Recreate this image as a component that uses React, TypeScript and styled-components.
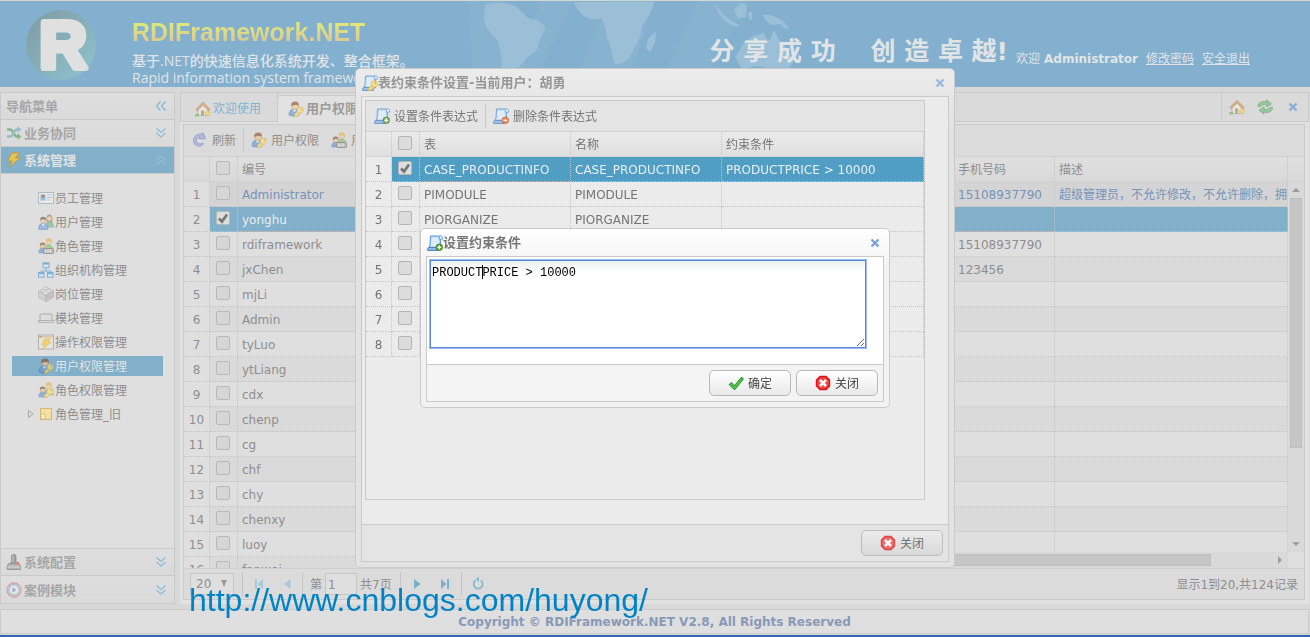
import React from "react";
import styled, { createGlobalStyle, css } from "styled-components";

const GlobalStyle = createGlobalStyle`
  *, *::before, *::after { box-sizing: border-box; }
  html, body { margin: 0; padding: 0; }
  body {
    background: #d8d8d8;
    font: 12px/16px "DejaVu Sans", "Noto Sans CJK SC", sans-serif;
    color: #8e8e8e;
    overflow: hidden;
  }
  button, input, select, textarea { font: inherit; color: inherit; margin: 0; }
  button { background: none; border: 0; padding: 0; cursor: pointer; text-align: left; }
`;

/* ---------- icons ---------- */

const IconBox = styled.svg<{ $fade?: number }>`
  width: 16px;
  height: 16px;
  flex: none;
  display: block;
  opacity: ${(p) => p.$fade ?? 1};
`;

type IconName =
  | "home" | "userKey" | "groupKey" | "users" | "group" | "reload" | "scrollAdd" | "scrollDel" | "scrollKey"
  | "card" | "org" | "brick" | "laptop" | "winBolt" | "note" | "shuffle" | "bolt" | "stamp" | "clock"
  | "ok" | "cancel" | "sync" | "cross" | "down2" | "up2" | "left2" | "first" | "prev" | "next" | "last" | "load";

const scroll = (
  <>
    <path d="M3.500 1h10v12H1.800L3 10z" fill="#b5d8f6" stroke="#5f95d2" />
    <path d="M4.700 2.500h7v9H3.800z" fill="#dceefc" />
    <path d="M12.300 2.500c0-2.200 3.200-2.200 3.200 0v1.700h-3.200z" fill="#e6f2fc" stroke="#5f95d2" strokeWidth=".9" />
    <path d="M.6 15.400c-.3-1.800.4-3 1.800-3h9.200c-1 1-1 2 0 3z" fill="#8fbcec" stroke="#4478b8" strokeWidth=".9" />
  </>
);
const person = (
  <>
    <path d="M1 14c0-4 2-6 5-6s5 2 5 6c-2 1.500-8 1.500-10 0z" fill="#5f93d6" stroke="#3b6cae" strokeWidth=".7" />
    <path d="M4.500 8.500L6.500 11l2-2.500z" fill="#fff" />
    <circle cx="7" cy="4.800" r="3.500" fill="#f6c695" stroke="#a9713f" strokeWidth=".6" />
    <path d="M3.300 5C2.800 1.500 5 .5 7.300.5c2.500 0 4 1.500 3.400 4.200C9.500 3.500 6 4 3.300 5z" fill="#8a4b22" />
  </>
);
const key = (
  <>
    <path d="M10.800 9l-4.300 4.300v2.200h3l.5-1.500 1.300-.2.300-1.400 1.700-.9z" fill="#f9d95c" stroke="#cf9c2c" strokeWidth=".6" />
    <circle cx="12.300" cy="9" r="3.200" fill="#fbdf6e" stroke="#cf9c2c" strokeWidth=".6" />
    <circle cx="13.400" cy="8" r=".8" fill="#b98514" />
  </>
);
const blonde = (
  <>
    <path d="M7 12c0-4 1.500-5 4-5s4 2 4 6z" fill="#7fc36a" stroke="#4e9440" strokeWidth=".6" />
    <circle cx="10.800" cy="4" r="2.700" fill="#f6cf9d" stroke="#b98a45" strokeWidth=".5" />
    <path d="M8 4c-.5-3 1-3.700 3-3.700s3.300 1.500 2.700 4C12.500 3 10 3 8 4z" fill="#e3b13c" />
    <path d="M.8 15c0-3.500 1.500-5 3.700-5s3.800 1.500 3.800 5z" fill="#5f93d6" stroke="#3b6cae" strokeWidth=".6" />
    <circle cx="4.600" cy="7.700" r="2.500" fill="#f6c695" stroke="#a9713f" strokeWidth=".5" />
    <path d="M2 7.700c-.4-2.500 1-3.200 2.700-3.200s3 1 2.500 3.200C6 6.500 4 6.700 2 7.700z" fill="#7a4a25" />
  </>
);
const bolt = <path d="M6 .8h7.500L9.500 5.500h5L3 15.500l3-6.500H1.500z" fill="#f9c83a" stroke="#d28a14" strokeWidth=".8" />;

const drawings: Record<IconName, React.ReactNode> = {
  home: (
    <>
      <path d="M3 8v6.500h10V8L8 3z" fill="#f7efe0" stroke="#9d9078" strokeWidth=".8" />
      <path d="M.8 8.500L8 1.200l7.200 7.300-1.400 1.300L8 4.200 2.200 9.800z" fill="#d99a5e" stroke="#a06a3c" strokeWidth=".7" />
      <path d="M6 14.500V9.500h3v5z" fill="#8f8f8f" />
      <path d="M0 15.500v-2.300l4-.7v3z" fill="#72b74c" />
      <path d="M12.500 8.700l1 2.200 2.400.3-1.700 1.700.4 2.400-2.100-1.200-2.200 1.200.4-2.400-1.700-1.700 2.400-.3z" fill="#fbd64a" stroke="#d8a31a" strokeWidth=".5" />
    </>
  ),
  userKey: <>{person}{key}</>,
  groupKey: <>{blonde}{key}</>,
  users: (
    <>
      <path d="M8.500 13V9c.5-2 5.500-2 6.500 1l.5 3z" fill="#6fb58c" stroke="#3f8860" strokeWidth=".6" />
      <path d="M8.500 7c0-3.500 0-6.500 2.700-6.500S14.500 3 14.300 8z" fill="#a86a3a" />
      <circle cx="11.300" cy="4.500" r="2.200" fill="#f6cf9d" />
      <path d="M.6 15.500C.6 11 2 9.500 5 9.500s5 1.500 5 6z" fill="#6ea3dc" stroke="#3b6cae" strokeWidth=".6" />
      <path d="M4 9.600l1.200 3 1.300-3z" fill="#fff" />
      <circle cx="5.200" cy="6.300" r="2.800" fill="#f6c695" stroke="#a9713f" strokeWidth=".5" />
      <path d="M2.300 6.300c-.4-2.500 1-3.600 3-3.600s3.200 1 2.700 3.600C6.500 5 4.500 5 2.300 6.300z" fill="#555" />
    </>
  ),
  group: (
    <>
      {blonde}
      <rect x="5.500" y="10.500" width="10" height="5" rx="1" fill="#aaa" stroke="#555" strokeWidth=".8" />
      <path d="M7 12.200h7M7 13.900h7" stroke="#fff" strokeWidth=".9" strokeDasharray="1.500 .8" />
    </>
  ),
  reload: (
    <path d="M11.500 1v2c1 0 1.500.5 1.500 1.500V7H7.500V5.500C5.500 6 4.500 7 4.500 8.500c0 3 3.500 4 6.500 2.500 1 0 .5 1.500-1 2.500-4 2-8.500-.5-8.500-5C1.500 4.500 4.500 2 8 2z" fill="#9eabd8" stroke="#6b7fba" strokeWidth=".7" />
  ),
  scrollAdd: (
    <>
      {scroll}
      <circle cx="12.300" cy="12.300" r="3.300" fill="#5fa83a" stroke="#2f6d1a" strokeWidth=".7" />
      <path d="M12.300 10.300v4M10.300 12.300h4" stroke="#fff" strokeWidth="1.300" />
    </>
  ),
  scrollDel: (
    <>
      {scroll}
      <circle cx="12.300" cy="12.300" r="3.300" fill="#ee7430" stroke="#b84512" strokeWidth=".7" />
      <path d="M10.300 12.300h4" stroke="#fff" strokeWidth="1.300" />
    </>
  ),
  scrollKey: <>{scroll}{key}</>,
  card: (
    <>
      <rect x=".5" y="2.500" width="15" height="11" fill="#eef2f6" stroke="#9aa3ad" />
      <rect x="2.500" y="4.500" width="5" height="6" fill="#6da5dd" />
      <circle cx="5" cy="6.300" r="1.500" fill="#84501f" />
      <path d="M9 5h5M9 7.500h5M9 10h3" stroke="#8db4da" strokeWidth="1.200" />
    </>
  ),
  org: (
    <g fill="#d5eafc" stroke="#3f90d0">
      <path d="M8 6v3M3 11.500V9h10v2.500" fill="none" />
      <rect x="5" y=".8" width="6" height="5" /><rect x=".5" y="10.500" width="5.500" height="4.700" /><rect x="9.500" y="10.500" width="5.500" height="4.700" />
      <path d="M5 1.800h6M.5 11.500H6M9.500 11.500H15" strokeWidth="1.600" />
    </g>
  ),
  brick: (
    <g stroke="#9a9a9a" strokeWidth=".7">
      <path d="M.5 5.500L8 9v6.500L.5 11.500z" fill="#c9c9c9" /><path d="M15.500 4.500L8 9v6.500l7.500-4.500z" fill="#b0b0b0" />
      <path d="M.5 5.500L8 1.500l7.500 3L8 9z" fill="#e2e2e2" />
      <ellipse cx="5" cy="5" rx="2" ry="1.300" fill="#eee" /><ellipse cx="10.500" cy="4.800" rx="2" ry="1.300" fill="#eee" /><ellipse cx="7.500" cy="2.300" rx="2" ry="1.300" fill="#eee" />
    </g>
  ),
  laptop: (
    <>
      <rect x="2" y="4" width="12" height="6.500" rx="1" fill="#dcdcdc" stroke="#8a8a8a" />
      <rect x=".5" y="10.500" width="15" height="2" fill="#ddd" stroke="#888" strokeWidth=".8" />
    </>
  ),
  winBolt: (
    <>
      <rect x=".5" y="1" width="15" height="14" fill="#e9e9e4" stroke="#93938d" />
      <path d="M1 2.700h14" stroke="#d9bd7e" strokeWidth="2" />
      <path d="M1.500 2.700h2.500" stroke="#d65333" strokeWidth="1.300" />
      <path d="M6.500 5h6L10 8.200h3.500L4 15.500l2.500-4.700H3.500z" fill="#fbc72f" stroke="#e09a15" strokeWidth=".5" />
    </>
  ),
  note: (
    <>
      <rect x="2.500" y="2.500" width="11" height="11" fill="#fde27a" stroke="#d79b2d" />
      <path d="M3 13V7.500l4 .5.500 5z" fill="#fff3b8" stroke="#d79b2d" strokeWidth=".7" />
    </>
  ),
  shuffle: (
    <>
      <path d="M1 4.500h3c3.500 0 3.500 7 7 7h2" fill="none" stroke="#4f9d51" strokeWidth="2.600" />
      <path d="M1 11.500h3c3.500 0 3.500-7 7-7h2" fill="none" stroke="#6fa5c4" strokeWidth="2.600" />
      <path d="M11.500 1.300L15.500 4.500l-4 3.200z" fill="#6fa5c4" /><path d="M11.500 8.300l4 3.200-4 3.200z" fill="#4f9d51" />
    </>
  ),
  bolt,
  stamp: (
    <>
      <path d="M5.500 2c0-2 4.500-2 4.500 0v5l1 3H4.500l1-3z" fill="#777" stroke="#444" strokeWidth=".6" />
      <path d="M7 2v6" stroke="#ccc" />
      <path d="M2.500 9.500h11l1 3v3H1v-3z" fill="#9a9a9a" stroke="#555" strokeWidth=".7" />
      <path d="M9 8h4v2.500H9z" fill="#d94a3a" /><path d="M1.500 13h12.500" stroke="#e2e2e2" />
    </>
  ),
  clock: (
    <>
      <circle cx="8" cy="8" r="7" fill="#fff" stroke="#cf6a6a" strokeWidth="1.300" />
      <circle cx="8" cy="8" r="5.300" fill="#e8f1fa" stroke="#6c8fc2" strokeWidth="1.200" />
      <path d="M6.500 5.500L10.500 8l-4 2.500z" fill="#5a7ab0" />
    </>
  ),
  ok: <path d="M1 9.500l2.500-2 3 3.200L13 2.500l2 .5v1.500L7 14.500H6z" fill="#4cc24a" stroke="#258a2a" strokeWidth=".9" />,
  cancel: (
    <>
      <path d="M5 1.500h6l3.500 3.500v6L11 14.500H5L1.500 11V5z" fill="#f04444" stroke="#e01014" strokeWidth="1.400" strokeLinejoin="round" />
      <path d="M5 5l6 6M11 5l-6 6" stroke="#fff" strokeWidth="2.600" />
    </>
  ),
  sync: (
    <g fill="#6cba72" stroke="#3f8c4a" strokeWidth=".7">
      <path d="M1 7.500C1 3 6 1.500 9.500 3V.8L14.500 4.800 9.500 8V6C6.500 5 4.500 6 4 7.500z" />
      <path d="M15.500 8.500c0 4.500-5 6-8.500 4.500v2.200L2 11.200 7 8v2c3 1 5 0 5.500-1.500z" />
    </g>
  ),
  cross: <path d="M4.500 4.500l7 7M11.500 4.500l-7 7" stroke="#7ba3d8" strokeWidth="2.400" />,
  down2: <path d="M3.500 3.500L8 7.500l4.500-4M3.500 8L8 12l4.500-4" fill="none" stroke="#66aede" strokeWidth="1.200" />,
  up2: <path d="M3.500 8L8 4l4.500 4M3.500 12.500L8 8.500l4.500 4" fill="none" stroke="#a9d3ee" strokeWidth="1.200" />,
  left2: <path d="M7.500 3.500L3.500 8l4 4.500M12.500 3.500L8.500 8l4 4.500" fill="none" stroke="#66aede" strokeWidth="1.200" />,
  first: <path d="M4 3h2v10H4zM12 3v10L6.500 8z" fill="#9cc6de" />,
  prev: <path d="M11.500 3v10L5 8z" fill="#9cc6de" />,
  next: <path d="M5 3v10l6.500-5z" fill="#4fa0cc" />,
  last: <path d="M4 3v10l5.500-5zM10 3h2v10h-2z" fill="#4fa0cc" />,
  load: (
    <>
      <path d="M5.500 4.500a4.500 4.500 0 1 0 5.300 0" fill="none" stroke="#4fa0cc" strokeWidth="1.700" />
      <path d="M9 .8v5L5.500 3.500z" fill="#4fa0cc" />
    </>
  ),
};

const Icon = ({ name, fade }: { name: IconName; fade?: number }) => (
  <IconBox viewBox="0 0 16 16" $fade={fade} aria-hidden="true">{drawings[name]}</IconBox>
);

/* Text beside an icon sits slightly below the icon's centre line. */
const Label = styled.span`
  padding-top: 2px;
`;

/* ---------- page frame ---------- */

const Page = styled.div`
  height: 100vh;
  display: flex;
  flex-direction: column;
  border-top: 1px solid #d3d8d3;
  border-bottom: 2px solid #3563b0;
`;

const Header = styled.header`
  position: relative;
  height: 86px;
  flex: none;
  display: flex;
  background: #84b0cf;
  color: #e0e4e6;
  white-space: nowrap;
  overflow: hidden;
`;

const WorldMap = styled.svg`
  position: absolute;
  left: 440px;
  top: 0;
  width: 440px;
  height: 86px;
`;

const Logo = styled.svg`
  width: 70px;
  height: 70px;
  margin: 9px 36px 0 26px;
  flex: none;
  overflow: visible;
`;

const Brand = styled.div`
  position: relative;
  padding-top: 17px;
`;

const BrandName = styled.h1`
  margin: 0 0 6px;
  font: bold 25px/28px "Liberation Sans", sans-serif;
  background: linear-gradient(#dfe67a 25%, #dcc893 85%);
  -webkit-background-clip: text;
  background-clip: text;
  color: transparent;
`;

const BrandLine = styled.p`
  margin: 0;
  font: 500 14px/17px "Open Sans", "Noto Sans CJK SC", sans-serif;
`;

const HeaderSide = styled.div`
  position: relative;
  margin-left: auto;
  padding-right: 60px;
  display: flex;
  gap: 8px;
`;

const Slogan = styled.p`
  margin: 35px 0 0;
  font: bold 25px/32px "DejaVu Sans", "Noto Sans CJK SC", sans-serif;
  white-space: pre;
`;

const UserBar = styled.nav`
  margin-top: 50px;
  display: flex;
  gap: 4px;
`;

const HeaderLink = styled.a`
  color: inherit;
  margin-left: 4px;
`;

const Main = styled.main`
  flex: 1;
  min-height: 0;
  display: flex;
  gap: 5px;
  padding: 5px 1px 5px 0;
`;

const Footer = styled.footer`
  height: 25px;
  flex: none;
  margin: 0 1px 1px 0;
  border: 1px solid #cbcbcb;
  background: #dfdfdf;
  text-align: center;
  font-weight: bold;
  line-height: 24px;
  color: #8899b9;
`;

/* ---------- sidebar ---------- */

const Sidebar = styled.aside`
  width: 175px;
  flex: none;
  display: flex;
  flex-direction: column;
  border: 1px solid #cacaca;
  background: #dfdfdf;
`;

const SideTitle = styled.button<{ $active?: boolean; $last?: boolean }>`
  height: 27px;
  flex: none;
  display: flex;
  align-items: center;
  gap: 2px;
  padding: 0 5px;
  font-size: 13px;
  font-weight: bold;
  border-bottom: ${(p) => (p.$last ? "0" : "1px solid #cacaca")};
  background: ${(p) => (p.$active ? "#82b0ca" : "linear-gradient(#dedede, #dadada)")};
  color: ${(p) => (p.$active ? "#e2e2e2" : "#a6a6a6")};
`;

const Grow = styled.span`
  flex: 1;
`;

const Tree = styled.ul`
  flex: 1;
  min-height: 0;
  margin: 0;
  padding: 14px 11px 0;
  list-style: none;
  border-bottom: 1px solid #cacaca;
  display: flex;
  flex-direction: column;
  gap: 4px;
`;

const TreeItem = styled.li<{ $active?: boolean }>`
  height: 20px;
  display: flex;
  align-items: center;
  background: ${(p) => (p.$active ? "#82b0ca" : "none")};
  color: ${(p) => (p.$active ? "#e2e2e2" : "#8e8e8e")};
`;

const Twist = styled.span`
  width: 26px;
  height: 16px;
  flex: none;
  display: flex;
  justify-content: flex-end;
  align-items: center;
  padding-right: 4px;
`;

const TreeLink = styled.a`
  display: flex;
  align-items: center;
  gap: 1px;
  color: inherit;
  text-decoration: none;
`;

/* ---------- workspace ---------- */

const Workspace = styled.section`
  flex: 1;
  min-width: 0;
  display: flex;
  flex-direction: column;
  background: #e1e1e1;
`;

const TabStrip = styled.div`
  height: 30px;
  flex: none;
  display: flex;
  border: 1px solid #cacaca;
  background: #dadada;
`;

const Tab = styled.button<{ $active?: boolean }>`
  display: flex;
  align-items: center;
  gap: 2px;
  color: #7db3d2;
  width: 97px;
  padding: 3px 0 0 14px;
  border-right: 1px solid #cacaca;
  ${(p) =>
    p.$active &&
    css`
      width: 130px;
      margin: 2px 0 -1px;
      padding: 0 0 0 10px;
      font-size: 13px;
      font-weight: bold;
      color: #9b9b9b;
      background: #e1e1e1;
      border: 1px solid #cacaca;
      border-width: 1px 1px 0 0;
      border-radius: 4px 4px 0 0;
      white-space: nowrap;
    `}
`;

const TabTools = styled.div`
  margin-left: auto;
  display: flex;
  align-items: center;
  gap: 12px;
  padding: 0 7px;
  border-left: 1px solid #cacaca;
`;

const GridPanel = styled.div`
  flex: 1;
  min-height: 0;
  margin: 2px 4px 4px 3px;
  border: 1px solid #cacaca;
  display: flex;
  flex-direction: column;
  background: #dfdfdf;
`;

const Toolbar = styled.div<{ $dialog?: boolean }>`
  height: ${(p) => (p.$dialog ? 31 : 32)}px;
  flex: none;
  display: flex;
  align-items: center;
  padding: 0 0 1px 8px;
  border-bottom: 1px solid #d0d0d0;
  background: ${(p) => (p.$dialog ? "#e4e4e4" : "#dbdbdb")};
`;

const ToolButton = styled.button`
  display: flex;
  align-items: center;
  gap: 4px;
  white-space: nowrap;
  & + & { margin-left: 12px; }
`;

const ToolSeparator = styled.span<{ $edge: number }>`
  width: 1px;
  height: 24px;
  margin: 0 ${(p) => p.$edge}px;
  background: #c6c6c6;
  flex: none;
`;

const GridBody = styled.div`
  flex: 1;
  min-height: 0;
  display: flex;
`;

const Frozen = styled.div`
  width: 205px;
  flex: none;
  overflow: hidden;
`;

const Scrolled = styled.div`
  flex: 1;
  min-width: 0;
  display: flex;
  flex-direction: column;
`;

const ScrolledRows = styled.div`
  flex: 1;
  min-height: 0;
  display: flex;
  overflow: hidden;
`;

const Rows = styled.table`
  flex: 1;
  width: 100%;
  table-layout: fixed;
  border-collapse: separate;
  border-spacing: 0;
`;

const rule = "1px dotted #c4c4c4";

const HeadCell = styled.th<{ $w?: number; $dialog?: boolean }>`
  width: ${(p) => (p.$w ? p.$w + "px" : "auto")};
  height: 25px;
  padding: 2px 0 0 4px;
  font-weight: normal;
  text-align: left;
  white-space: nowrap;
  overflow: hidden;
  border-right: ${rule};
  border-bottom: 1px solid #d3d3d3;
  background: ${(p) => (p.$dialog ? "linear-gradient(#ebebeb, #dfdfdf)" : "linear-gradient(#dfdfdf, #d9d9d9)")};
`;

type Tone = "plain" | "alt" | "hover" | "picked";

const toneColor: Record<Tone, string> = {
  plain: "transparent",
  alt: "#dadada",
  hover: "#d4d4d4",
  picked: "#82b0ca",
};

const Cell = styled.td<{ $tone?: Tone; $dialog?: boolean }>`
  height: 25px;
  padding: 2px 0 0 4px;
  white-space: nowrap;
  overflow: hidden;
  border-right: ${rule};
  border-bottom: ${rule};
  background: ${(p) => (p.$tone === "picked" && p.$dialog ? "#519ec5" : toneColor[p.$tone ?? "plain"])};
  color: ${(p) => (p.$tone === "picked" ? "#e8eef2" : p.$tone === "hover" ? "#7593bb" : "inherit")};
`;

const NumberCell = styled(Cell)`
  padding: 2px 0 0;
  text-align: center;
`;

const CheckCell = styled(Cell)`
  padding: 0 0 0 6px;
`;

const CheckHead = styled(HeadCell)`
  padding: 0 0 0 6px;
`;

const Check = styled.input<{ $dialog?: boolean }>`
  appearance: none;
  display: block;
  width: 14px;
  height: 14px;
  margin-bottom: 2px;
  border: 1px solid ${(p) => (p.$dialog ? "#b4b4b4" : "#b8b8b8")};
  border-radius: 2px;
  background: ${(p) => (p.$dialog ? "#dcdcdc" : "#d6d6d6")};
  &:checked {
    background: #dedede url("data:image/svg+xml,%3Csvg xmlns='http://www.w3.org/2000/svg' viewBox='0 0 12 12'%3E%3Cpath d='M2 6.500l3 3 5-7' fill='none' stroke='%23777' stroke-width='2.800'/%3E%3C/svg%3E") center / 12px 12px no-repeat;
  }
`;

const VScroll = styled.div`
  width: 16px;
  flex: none;
  display: flex;
  flex-direction: column;
  background: #d9d9d9;
`;

const VScrollCap = styled.div`
  height: 25px;
  flex: none;
  background: linear-gradient(#dfdfdf, #d9d9d9);
  border-bottom: 1px solid #d3d3d3;
`;

const VTrack = styled.div`
  flex: 1;
  padding: 0 2px;
`;

const VThumb = styled.div`
  height: 74%;
  background: #c6c6c6;
  border: 1px solid #bdbdbd;
`;

const HScroll = styled.div`
  height: 16px;
  flex: none;
  display: flex;
  background: #d9d9d9;
`;

const HTrack = styled.div`
  flex: 1;
  padding: 2px 0;
`;

const HThumb = styled.div`
  width: 93%;
  height: 12px;
  background: #c6c6c6;
  border: 1px solid #bdbdbd;
`;

const Corner = styled.span`
  width: 16px;
  background: #dfdfdf;
`;

const Arrow = ({ d }: { d: string }) => (
  <IconBox viewBox="0 0 16 16" aria-hidden="true"><path d={d} fill="#9c9c9c" /></IconBox>
);

const Pager = styled.div`
  height: 31px;
  flex: none;
  display: flex;
  align-items: center;
  padding: 0 6px;
  border-top: 1px solid #cfcfcf;
  background: #dbdbdb;
`;

const SizeBox = styled.span`
  position: relative;
  width: 44px;
  height: 22px;
`;

const SizeSelect = styled.select`
  appearance: none;
  width: 44px;
  height: 22px;
  padding: 0 5px;
  border: 1px solid #c6c6c6;
  border-radius: 0;
  background: #dfdfdf;
`;

const SizeArrow = styled.span`
  position: absolute;
  right: 2px;
  top: 3px;
  pointer-events: none;
`;

const PageButtons = styled.div`
  display: flex;
  gap: 12px;
`;

const PageLabel = styled.label`
  display: flex;
  align-items: center;
  gap: 3px;
`;

const PageInput = styled.input`
  width: 32px;
  height: 22px;
  padding: 2px 2px 0;
  border: 1px solid #c6c6c6;
  background: #dfdfdf;
`;

/* ---------- dialogs ---------- */

const Overlay = styled.div`
  position: fixed;
  inset: 0;
  padding-bottom: 1px;
  display: grid;
  place-items: center;
`;

const Dialog = styled.section<{ $w: number; $h: number; $front?: boolean }>`
  width: ${(p) => p.$w}px;
  height: ${(p) => p.$h}px;
  display: flex;
  flex-direction: column;
  padding: 0 5px 5px;
  border: 1px solid #cacaca;
  border-radius: 5px;
  color: #747474;
  background: ${(p) => (p.$front ? "linear-gradient(#ffffff, #f2f2f2 40px)" : "linear-gradient(#ececec, #e2e2e2 60px)")};
`;

const DialogTitle = styled.h2<{ $front?: boolean }>`
  height: 27px;
  flex: none;
  margin: 0;
  display: flex;
  align-items: center;
  font-size: 13px;
  color: ${(p) => (p.$front ? "#777" : "#959595")};
  padding: 0 1px;
`;

const DialogBody = styled.div<{ $front?: boolean }>`
  flex: 1;
  min-height: 0;
  padding: 3px;
  border: 1px solid #cacaca;
  background: ${(p) => (p.$front ? "#fff" : "#ebebeb")};
`;

const DialogFooter = styled.div<{ $front?: boolean }>`
  height: 37px;
  flex: none;
  display: flex;
  align-items: center;
  justify-content: flex-end;
  gap: 5px;
  padding: 0 5px;
  border: 1px solid #cacaca;
  border-top: 0;
  background: ${(p) => (p.$front ? "#f4f4f4" : "#e4e4e4")};
`;

const FormButton = styled.button<{ $front?: boolean }>`
  width: 82px;
  height: 26px;
  display: flex;
  align-items: center;
  justify-content: center;
  gap: 4px;
  border: 1px solid ${(p) => (p.$front ? "#b9b9b9" : "#bdbdbd")};
  border-radius: 5px;
  color: ${(p) => (p.$front ? "#444" : "#707070")};
  background: ${(p) => (p.$front ? "linear-gradient(#ffffff, #e9e9e9)" : "linear-gradient(#ebebeb, #d9d9d9)")};
`;

const RuleGrid = styled.div`
  width: 560px;
  height: 400px;
  border: 1px solid #cacaca;
`;

const EditorBox = styled.div`
  position: relative;
`;

const Editor = styled.textarea`
  display: block;
  width: 436px;
  height: 88px;
  padding: 4px 1px;
  border: 1px solid #5a86d8;
  outline: 1px solid #9dbdf0;
  font: 12px/16px "Liberation Mono", monospace;
  color: #000;
  background: linear-gradient(#eef1f1, #fff 12px);
  resize: both;
  caret-color: transparent;
`;

const Caret = styled.span`
  position: absolute;
  left: 52px;
  top: 5px;
  width: 1px;
  height: 14px;
  background: #000;
`;

/* ---------- data ---------- */

const menu: { icon: IconName; text: string; active?: boolean; folder?: boolean }[] = [
  { icon: "card", text: "员工管理" },
  { icon: "users", text: "用户管理" },
  { icon: "group", text: "角色管理" },
  { icon: "org", text: "组织机构管理" },
  { icon: "brick", text: "岗位管理" },
  { icon: "laptop", text: "模块管理" },
  { icon: "winBolt", text: "操作权限管理" },
  { icon: "userKey", text: "用户权限管理", active: true },
  { icon: "groupKey", text: "角色权限管理" },
  { icon: "note", text: "角色管理_旧", folder: true },
];

const users: { name: string; phone?: string; note?: string }[] = [
  { name: "Administrator", phone: "15108937790", note: "超级管理员，不允许修改，不允许删除，拥有" },
  { name: "yonghu" },
  { name: "rdiframework", phone: "15108937790" },
  { name: "jxChen", phone: "123456" },
  { name: "mjLi" }, { name: "Admin" }, { name: "tyLuo" }, { name: "ytLiang" },
  { name: "cdx" }, { name: "chenp" }, { name: "cg" }, { name: "chf" },
  { name: "chy" }, { name: "chenxy" }, { name: "luoy" }, { name: "fanwei" },
];

const rules = [
  { table: "CASE_PRODUCTINFO", condition: "PRODUCTPRICE > 10000" },
  { table: "PIMODULE" },
  { table: "PIORGANIZE" },
  {}, {}, {}, {}, {},
] as { table?: string; condition?: string }[];

const userTone = (i: number): Tone => (i === 0 ? "hover" : i === 1 ? "picked" : i % 2 ? "alt" : "plain");

/* ---------- parts ---------- */

const TopBar = () => (
  <Header>
    <WorldMap viewBox="0 0 440 86" aria-hidden="true">
      <g fill="#8bb5d1" opacity=".6">
        <path d="M28 0h36L62 86H34z" /><path d="M100 0h32L92 86H70z" /><path d="M166 0h48L186 86h-50z" /><path d="M258 0h50L260 86h-40z" />
      </g>
      <g fill="#9bbfd6">
        <path d="M45 4c10-3 24-4 34 4l9 9c10 2 18 6 17 12-4 6-6 10-7 18-6 8-12 8-14 14-5 5-9 8-11 15-2 6-1 8-1 10H60c3-16 2-34-2-46-9-10-14-14-14-24z" />
        <path d="M134 1h80c-1 9-8 17-12 25-1 14-8 19-12 30-5 6-10 7-15 7-4-10-3-18-9-27 2-8-3-12-4-19-8 2-12 2-18-2-6-4-8-9-10-14z" />
        <path d="M212 34l4-3-1 10-5 10-4-4 2-9z" />
        <path d="M275 2c5 8 12 17 25 22l-4 2c-12-4-19-13-21-24zM294 9l7-7 6 2-1 12-8 2zM308 12l4-2v8l-2 2zM322 14c10-1 22 4 27 14l-5-1-4-4-10 1z" />
        <path d="M295 56l9-14 9-7 11-3 2 6 4 1 4-10 6 11 10 12 3 9-8 12-8 2-9-8-12-2-14 3z" />
      </g>
    </WorldMap>
    <Logo viewBox="0 0 70 70" aria-label="RDIFramework">
      <defs>
        <linearGradient id="disc" x1="0" y1="0" x2="1" y2="1">
          <stop offset="0" stopColor="#7f9aa2" /><stop offset="1" stopColor="#8ec4cf" />
        </linearGradient>
      </defs>
      <circle cx="35" cy="35" r="35" fill="url(#disc)" />
      <text x="37" y="58" textAnchor="middle" fontFamily="Liberation Sans" fontWeight="bold" fontSize="66" fill="#e0e0e0" stroke="#e0e0e0" strokeWidth="6" strokeLinejoin="round">R</text>
    </Logo>
    <Brand>
      <BrandName>RDIFramework.NET</BrandName>
      <BrandLine>基于.NET的快速信息化系统开发、整合框架。</BrandLine>
      <BrandLine>Rapid information system framework</BrandLine>
    </Brand>
    <HeaderSide>
      <Slogan>{"分 享 成 功    创 造 卓 越!"}</Slogan>
      <UserBar>
        <span>欢迎</span>
        <b>Administrator</b>
        <HeaderLink href="#password">修改密码</HeaderLink>
        <HeaderLink href="#logout">安全退出</HeaderLink>
      </UserBar>
    </HeaderSide>
  </Header>
);

const Navigation = () => (
  <Sidebar>
    <SideTitle><Label>导航菜单</Label><Grow /><Icon name="left2" fade={0.8} /></SideTitle>
    <SideTitle><Icon name="shuffle" fade={0.6} /><Label>业务协同</Label><Grow /><Icon name="down2" fade={0.7} /></SideTitle>
    <SideTitle $active><Icon name="bolt" fade={0.8} /><Label>系统管理</Label><Grow /><Icon name="up2" fade={0.4} /></SideTitle>
    <Tree>
      {menu.map((m) => (
        <TreeItem key={m.text} $active={m.active}>
          <Twist>
            {m.folder && (
              <svg width="6" height="8" viewBox="0 0 6 8" aria-hidden="true"><path d="M.5.5v7L5 4z" fill="none" stroke="#a8a8a8" /></svg>
            )}
          </Twist>
          <TreeLink href="#menu"><Icon name={m.icon} fade={0.6} /><Label>{m.text}</Label></TreeLink>
        </TreeItem>
      ))}
    </Tree>
    <SideTitle><Icon name="stamp" fade={0.6} /><Label>系统配置</Label><Grow /><Icon name="down2" fade={0.7} /></SideTitle>
    <SideTitle $last><Icon name="clock" fade={0.5} /><Label>案例模块</Label><Grow /><Icon name="down2" fade={0.7} /></SideTitle>
  </Sidebar>
);

const UserGrid = () => (
  <GridBody>
    <Frozen>
      <Rows>
        <thead>
          <tr>
            <HeadCell $w={26} />
            <CheckHead $w={28}><Check type="checkbox" aria-label="全选" /></CheckHead>
            <HeadCell>编号</HeadCell>
          </tr>
        </thead>
        <tbody>
          {users.map((u, i) => (
            <tr key={u.name}>
              <NumberCell>{i + 1}</NumberCell>
              <CheckCell $tone={userTone(i)}><Check type="checkbox" aria-label={u.name} defaultChecked={i === 1} /></CheckCell>
              <Cell $tone={userTone(i)}>{u.name}</Cell>
            </tr>
          ))}
        </tbody>
      </Rows>
    </Frozen>
    <Scrolled>
      <ScrolledRows>
        <Rows>
          <thead>
            <tr><HeadCell /><HeadCell $w={101}>手机号码</HeadCell><HeadCell $w={233}>描述</HeadCell></tr>
          </thead>
          <tbody>
            {users.map((u, i) => (
              <tr key={u.name}>
                <Cell $tone={userTone(i)} />
                <Cell $tone={userTone(i)}>{u.phone}</Cell>
                <Cell $tone={userTone(i)}>{u.note}</Cell>
              </tr>
            ))}
          </tbody>
        </Rows>
        <VScroll>
          <VScrollCap />
          <Arrow d="M4 10l4-4 4 4z" />
          <VTrack><VThumb /></VTrack>
          <Arrow d="M4 6l4 4 4-4z" />
        </VScroll>
      </ScrolledRows>
      <HScroll>
        <Arrow d="M10 4L6 8l4 4z" />
        <HTrack><HThumb /></HTrack>
        <Arrow d="M6 4l4 4-4 4z" />
        <Corner />
      </HScroll>
    </Scrolled>
  </GridBody>
);

const UserPager = () => (
  <Pager>
    <SizeBox>
      <SizeSelect aria-label="每页记录数" defaultValue="20"><option>20</option></SizeSelect>
      <SizeArrow><Arrow d="M5 4h6l-3 7z" /></SizeArrow>
    </SizeBox>
    <ToolSeparator $edge={8} />
    <PageButtons>
      <button aria-label="首页"><Icon name="first" fade={0.8} /></button>
      <button aria-label="上一页"><Icon name="prev" fade={0.8} /></button>
    </PageButtons>
    <ToolSeparator $edge={7} />
    <PageLabel><Label>第</Label><PageInput defaultValue="1" /><Label>共7页</Label></PageLabel>
    <ToolSeparator $edge={8} />
    <PageButtons>
      <button aria-label="下一页"><Icon name="next" fade={0.7} /></button>
      <button aria-label="末页"><Icon name="last" fade={0.7} /></button>
    </PageButtons>
    <ToolSeparator $edge={8} />
    <button aria-label="刷新列表"><Icon name="load" fade={0.6} /></button>
    <Grow />
    <Label>显示1到20,共124记录</Label>
  </Pager>
);

const RuleDialog = () => (
  <Overlay>
    <Dialog $w={600} $h={500} role="dialog" aria-label="表约束条件设置">
      <DialogTitle>
        <Icon name="scrollKey" fade={0.8} />表约束条件设置-当前用户：胡勇<Grow />
        <button aria-label="关闭窗口"><Icon name="cross" fade={0.7} /></button>
      </DialogTitle>
      <DialogBody>
        <RuleGrid>
          <Toolbar $dialog>
            <ToolButton><Icon name="scrollAdd" fade={0.8} /><Label>设置条件表达式</Label></ToolButton>
            <ToolSeparator $edge={7} />
            <ToolButton><Icon name="scrollDel" fade={0.8} /><Label>删除条件表达式</Label></ToolButton>
          </Toolbar>
          <Rows>
            <thead>
              <tr>
                <HeadCell $dialog $w={26} />
                <CheckHead $dialog $w={28}><Check $dialog type="checkbox" aria-label="全选" /></CheckHead>
                <HeadCell $dialog $w={151}>表</HeadCell>
                <HeadCell $dialog $w={151}>名称</HeadCell>
                <HeadCell $dialog>约束条件</HeadCell>
              </tr>
            </thead>
            <tbody>
              {rules.map((r, i) => {
                const tone: Tone = i === 0 ? "picked" : "plain";
                return (
                  <tr key={i}>
                    <NumberCell>{i + 1}</NumberCell>
                    <CheckCell $dialog $tone={tone}><Check $dialog type="checkbox" aria-label={"选择" + (i + 1)} defaultChecked={i === 0} /></CheckCell>
                    <Cell $dialog $tone={tone}>{r.table}</Cell>
                    <Cell $dialog $tone={tone}>{r.table}</Cell>
                    <Cell $dialog $tone={tone}>{r.condition}</Cell>
                  </tr>
                );
              })}
            </tbody>
          </Rows>
        </RuleGrid>
      </DialogBody>
      <DialogFooter>
        <FormButton><Icon name="cancel" fade={0.75} /><Label>关闭</Label></FormButton>
      </DialogFooter>
    </Dialog>
  </Overlay>
);

const ConditionDialog = () => (
  <Overlay>
    <Dialog $front $w={470} $h={180} role="dialog" aria-label="设置约束条件">
      <DialogTitle $front>
        <Icon name="scrollAdd" />设置约束条件<Grow />
        <button aria-label="关闭窗口"><Icon name="cross" /></button>
      </DialogTitle>
      <DialogBody $front>
        <EditorBox>
          <Editor aria-label="约束条件" spellCheck={false} defaultValue="PRODUCTPRICE > 10000" />
          <Caret />
        </EditorBox>
      </DialogBody>
      <DialogFooter $front>
        <FormButton $front><Icon name="ok" /><Label>确定</Label></FormButton>
        <FormButton $front><Icon name="cancel" /><Label>关闭</Label></FormButton>
      </DialogFooter>
    </Dialog>
  </Overlay>
);

const Watermark = styled.p`
  position: fixed;
  left: 189px;
  bottom: 19px;
  margin: 0;
  font: 32px/36px "Liberation Sans", sans-serif;
  color: #0083c6;
`;

export default function App() {
  return (
    <>
      <GlobalStyle />
      <Page>
        <TopBar />
        <Main>
          <Navigation />
          <Workspace>
            <TabStrip>
              <Tab><Icon name="home" fade={0.6} /><span>欢迎使用</span></Tab>
              <Tab $active><Icon name="userKey" fade={0.6} /><span>用户权限管理</span></Tab>
              <TabTools>
                <button aria-label="主页"><Icon name="home" fade={0.6} /></button>
                <button aria-label="刷新标签"><Icon name="sync" fade={0.6} /></button>
                <button aria-label="关闭标签"><Icon name="cross" fade={0.8} /></button>
              </TabTools>
            </TabStrip>
            <GridPanel>
              <Toolbar>
                <ToolButton><Icon name="reload" fade={0.7} /><Label>刷新</Label></ToolButton>
                <ToolSeparator $edge={7} />
                <ToolButton><Icon name="userKey" fade={0.6} /><Label>用户权限</Label></ToolButton>
                <ToolButton><Icon name="group" fade={0.6} /><Label>用户角色</Label></ToolButton>
              </Toolbar>
              <UserGrid />
              <UserPager />
            </GridPanel>
          </Workspace>
        </Main>
        <Footer>Copyright © RDIFramework.NET V2.8, All Rights Reserved</Footer>
      </Page>
      <RuleDialog />
      <ConditionDialog />
      <Watermark>http://www.cnblogs.com/huyong/</Watermark>
    </>
  );
}
